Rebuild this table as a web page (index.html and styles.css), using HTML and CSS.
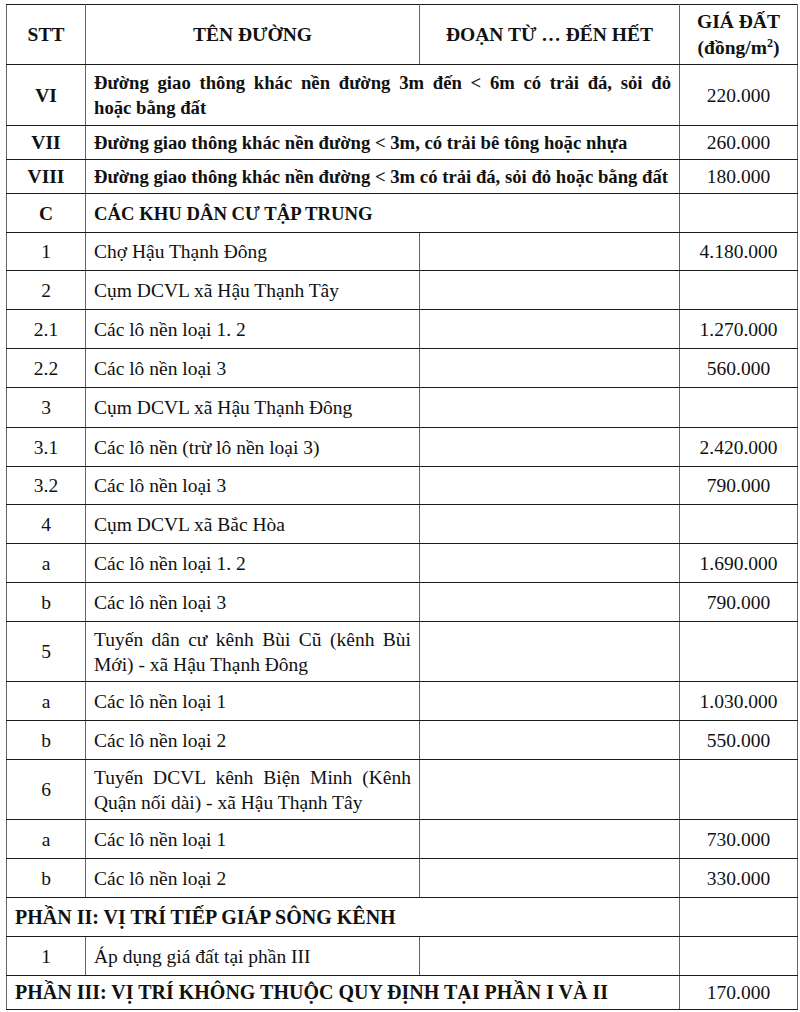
FILE: index.html
```html
<!DOCTYPE html>
<html lang="vi">
<head>
<meta charset="utf-8">
<title>Bảng giá đất</title>
<link rel="stylesheet" href="styles.css">
</head>
<body>
<table class="price-table">
  <colgroup>
    <col class="c-stt">
    <col class="c-name">
    <col class="c-range">
    <col class="c-price">
  </colgroup>
  <thead>
    <tr class="h-head">
      <th>STT</th>
      <th>TÊN ĐƯỜNG</th>
      <th>ĐOẠN TỪ … ĐẾN HẾT</th>
      <th>GIÁ ĐẤT<br>(đồng/m<sup>2</sup>)</th>
    </tr>
  </thead>
  <tbody>
    <tr class="h-61 bold">
      <td class="stt">VI</td>
      <td class="name" colspan="2">Đường giao thông khác nền đường 3m đến &lt; 6m có trải đá, sỏi đỏ <span class="keep">hoặc bằng đất</span></td>
      <td class="price normal">220.000</td>
    </tr>
    <tr class="h-34 bold">
      <td class="stt">VII</td>
      <td class="name" colspan="2">Đường giao thông khác nền đường &lt; 3m, có trải bê tông hoặc nhựa</td>
      <td class="price normal">260.000</td>
    </tr>
    <tr class="h-34 bold">
      <td class="stt">VIII</td>
      <td class="name" colspan="2">Đường giao thông khác nền đường &lt; 3m có trải đá, sỏi đỏ hoặc bằng đất</td>
      <td class="price normal">180.000</td>
    </tr>
    <tr class="h-39 bold">
      <td class="stt">C</td>
      <td class="name" colspan="2">CÁC KHU DÂN CƯ TẬP TRUNG</td>
      <td class="price"></td>
    </tr>
    <tr class="h-38"><td class="stt">1</td><td class="name">Chợ Hậu Thạnh Đông</td><td></td><td class="price">4.180.000</td></tr>
    <tr class="h-39"><td class="stt">2</td><td class="name">Cụm DCVL xã Hậu Thạnh Tây</td><td></td><td class="price"></td></tr>
    <tr class="h-39"><td class="stt">2.1</td><td class="name">Các lô nền loại 1. 2</td><td></td><td class="price">1.270.000</td></tr>
    <tr class="h-39"><td class="stt">2.2</td><td class="name">Các lô nền loại 3</td><td></td><td class="price">560.000</td></tr>
    <tr class="h-40"><td class="stt">3</td><td class="name">Cụm DCVL xã Hậu Thạnh Đông</td><td></td><td class="price"></td></tr>
    <tr class="h-39"><td class="stt">3.1</td><td class="name">Các lô nền (trừ lô nền loại 3)</td><td></td><td class="price">2.420.000</td></tr>
    <tr class="h-38"><td class="stt">3.2</td><td class="name">Các lô nền loại 3</td><td></td><td class="price">790.000</td></tr>
    <tr class="h-39"><td class="stt">4</td><td class="name">Cụm DCVL xã Bắc Hòa</td><td></td><td class="price"></td></tr>
    <tr class="h-39"><td class="stt">a</td><td class="name">Các lô nền loại 1. 2</td><td></td><td class="price">1.690.000</td></tr>
    <tr class="h-39"><td class="stt">b</td><td class="name">Các lô nền loại 3</td><td></td><td class="price">790.000</td></tr>
    <tr class="h-60"><td class="stt">5</td><td class="name">Tuyến dân cư kênh Bùi Cũ (kênh Bùi Mới) - xã Hậu Thạnh Đông</td><td></td><td class="price"></td></tr>
    <tr class="h-39"><td class="stt">a</td><td class="name">Các lô nền loại 1</td><td></td><td class="price">1.030.000</td></tr>
    <tr class="h-39"><td class="stt">b</td><td class="name">Các lô nền loại 2</td><td></td><td class="price">550.000</td></tr>
    <tr class="h-60"><td class="stt">6</td><td class="name">Tuyến DCVL kênh Biện Minh (Kênh Quận nối dài) - xã Hậu Thạnh Tây</td><td></td><td class="price"></td></tr>
    <tr class="h-39"><td class="stt">a</td><td class="name">Các lô nền loại 1</td><td></td><td class="price">730.000</td></tr>
    <tr class="h-39"><td class="stt">b</td><td class="name">Các lô nền loại 2</td><td></td><td class="price">330.000</td></tr>
    <tr class="h-39 bold">
      <td class="part" colspan="3">PHẦN II: VỊ TRÍ TIẾP GIÁP SÔNG KÊNH</td>
      <td class="price"></td>
    </tr>
    <tr class="h-39"><td class="stt">1</td><td class="name">Áp dụng giá đất tại phần III</td><td></td><td class="price"></td></tr>
    <tr class="h-34 bold">
      <td class="part" colspan="3">PHẦN III: VỊ TRÍ KHÔNG THUỘC QUY ĐỊNH TẠI PHẦN I VÀ II</td>
      <td class="price normal">170.000</td>
    </tr>
  </tbody>
</table>
</body>
</html>
```
FILE: styles.css
```css
html, body {
  margin: 0;
  padding: 0;
  background: #fff;
}
body {
  padding: 4px 0 0 6px;
  font-family: "Liberation Serif", "Times New Roman", serif;
  font-size: 19.5px;
  color: #111;
}
.price-table {
  border-collapse: collapse;
  table-layout: fixed;
  width: 791px;
  border: 1px solid #555;
}
.c-stt { width: 79px; }
.c-name { width: 334px; }
.c-range { width: 260px; }
.c-price { width: 118px; }

.price-table th,
.price-table td {
  border-top: 1px solid #1a1a1a;
  border-bottom: 1px solid #1a1a1a;
  border-left: 1px solid #666;
  border-right: 1px solid #666;
  padding: 0 8px;
  vertical-align: middle;
  line-height: 25px;
  overflow: hidden;
}
.price-table th {
  font-weight: bold;
  text-align: center;
  height: 59px;
  line-height: 26px;
}
.price-table th sup {
  font-size: 12px;
  line-height: 0;
  vertical-align: 7px;
}
.stt { text-align: center; }
.name { text-align: justify; }
.keep { white-space: nowrap; }
.price { text-align: center; }
.part { text-align: left; padding-left: 8px; font-size: 20px; }
.bold td { font-weight: bold; }
.bold td.name { font-size: 18.7px; }
.bold td.normal { font-weight: normal; }

.h-34 td { height: 33px; }
.h-38 td { height: 37px; }
.h-39 td { height: 38px; }
.h-40 td { height: 39px; }
.h-60 td { height: 59px; }
.h-61 td { height: 60px; }
```
